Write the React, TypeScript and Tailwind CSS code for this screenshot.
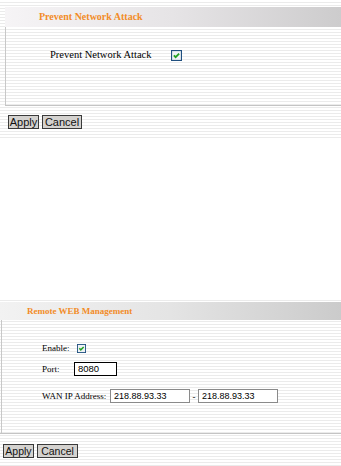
import React from 'react';

const stripes =
  'bg-[repeating-linear-gradient(to_bottom,#ffffff_0px,#ffffff_2px,#ebebeb_2px,#ebebeb_3px)]';

function CheckBox({ size }: { size: number }) {
  return (
    <svg width={size} height={size} viewBox="0 0 10 10" className="block shrink-0">
      <rect x="0.5" y="0.5" width="9" height="9" fill="#eef2f6" stroke="#1f4f7f" />
      <path d="M2.6 4.8 L4.2 6.5 L7.4 3.2" fill="none" stroke="#21a121" strokeWidth="1.6" />
    </svg>
  );
}

function Btn({ label, w, h, text }: { label: string; w: string; h: string; text: string }) {
  return (
    <button
      className={`${w} ${h} ${text} bg-[#d4d2cf] border border-[#3a3a3a] flex items-center justify-center leading-none text-[#111] font-['Liberation_Sans',Arial,sans-serif]`}
    >
      {label}
    </button>
  );
}

export default function App() {
  return (
    <div className="w-[341px] h-[466px] bg-white overflow-hidden font-['Liberation_Serif','Times_New_Roman',serif] text-black">
      {/* Prevent Network Attack */}
      <section className={`h-[140px] pt-[7px] ${stripes}`}>
        <div className="ml-[5px] h-[20px] bg-gradient-to-r from-[#f6f4f6] via-[#e6e4e6] to-[#cdcccd] flex items-center pl-[34px]">
          <span className="text-[10px] font-bold text-[#f28c28] leading-none">Prevent Network Attack</span>
        </div>
        <div className="ml-[5px] h-[78px] border-l border-[#c8c8c8] pl-[44px] pt-[23px]">
          <div className="flex items-center h-[11px]">
            <span className="w-[121px] text-[10.5px] leading-none">Prevent Network Attack</span>
            <CheckBox size={11} />
          </div>
        </div>
        <div className="ml-[5px] h-px bg-[#c4c4c4]" />
        <div className="flex gap-[3px] pl-[8px] mt-[9px]">
          <Btn label="Apply" w="w-[31px]" h="h-[14px]" text="text-[11px]" />
          <Btn label="Cancel" w="w-[40px]" h="h-[14px]" text="text-[11px]" />
        </div>
      </section>

      <div className="h-[158px]" />

      {/* Remote WEB Management */}
      <section className={`h-[168px] pt-[4px] ${stripes}`}>
        <div className="h-[18px] bg-gradient-to-r from-[#f2f2f2] via-[#e4e4e4] to-[#cbcbcb] flex items-center pl-[27px]">
          <span className="text-[9px] font-bold text-[#f28c28] leading-none">Remote WEB Management</span>
        </div>
        <div className="ml-[1px] h-[113px] border-l border-[#c8c8c8] pl-[40px] pt-[24px] text-[9px]">
          <div className="flex items-center h-[9px]">
            <span className="w-[35px] leading-none">Enable:</span>
            <CheckBox size={9} />
          </div>
          <div className="flex items-center h-[14px] mt-[9px]">
            <span className="w-[32px] leading-none">Port:</span>
            <div className="w-[43px] h-[14px] border border-black bg-white flex items-center pl-[3px] font-['Liberation_Sans',Arial,sans-serif] text-[9.5px] leading-none">
              8080
            </div>
          </div>
          <div className="flex items-center h-[14px] mt-[13px]">
            <span className="w-[68px] leading-none whitespace-nowrap">WAN IP Address:</span>
            <div className="w-[80px] h-[14px] border border-[#8a8a8a] bg-white flex items-center pl-[3px] font-['Liberation_Sans',Arial,sans-serif] text-[9px] leading-none">
              218.88.93.33
            </div>
            <span className="w-[8px] text-center leading-none mt-[3px]">-</span>
            <div className="w-[80px] h-[14px] border border-[#8a8a8a] bg-white flex items-center pl-[3px] font-['Liberation_Sans',Arial,sans-serif] text-[9px] leading-none">
              218.88.93.33
            </div>
          </div>
        </div>
        <div className="h-px bg-[#c4c4c4]" />
        <div className="flex gap-[3px] pl-[3px] mt-[10px]">
          <Btn label="Apply" w="w-[31px]" h="h-[14px]" text="text-[10.5px]" />
          <Btn label="Cancel" w="w-[41px]" h="h-[14px]" text="text-[10.5px]" />
        </div>
      </section>
    </div>
  );
}
